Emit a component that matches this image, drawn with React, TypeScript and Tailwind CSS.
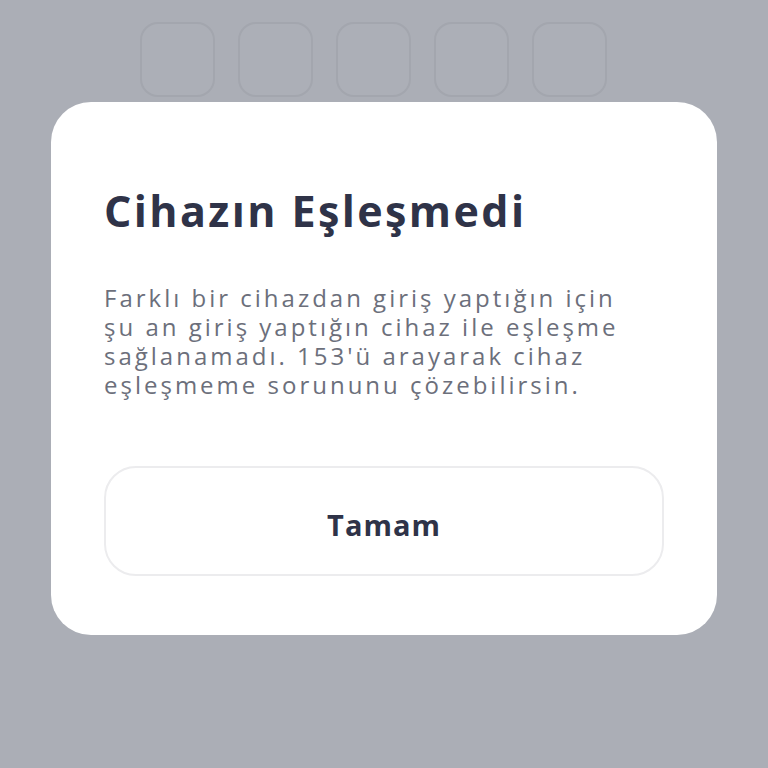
import React from "react";

export default function App() {
  const slots = [0, 1, 2, 3, 4];

  return (
    <div
      className="w-[768px] h-[768px] bg-[#abaeb6] overflow-hidden flex flex-col"
      style={{ fontFamily: "'Open Sans', 'Noto Sans', sans-serif" }}
    >
      {/* Code slots behind the modal */}
      <div className="flex justify-center gap-[23px] pt-[22px] pr-[21px]">
        {slots.map((i) => (
          <div
            key={i}
            className="w-[75px] h-[75px] rounded-[18px] border-2 border-[#a3a6ae] bg-[#acafb7]"
          />
        ))}
      </div>

      {/* Modal */}
      <div className="mx-[51px] mt-[5px] bg-white rounded-[40px] h-[533px] px-[53px] pt-[81px]">
        <h2 className="text-[43px] leading-[56px] font-bold text-[#2f3348] tracking-[2.4px] whitespace-nowrap">
          Cihazın Eşleşmedi
        </h2>
        <p className="mt-[44px] text-[24px] leading-[29px] text-[#6c6f7b] tracking-[3px] whitespace-nowrap">
          Farklı bir cihazdan giriş yaptığın için
          <br />
          şu an giriş yaptığın cihaz ile eşleşme
          <br />
          sağlanamadı. 153'ü arayarak cihaz
          <br />
          eşleşmeme sorununu çözebilirsin.
        </p>
        <button className="mt-[67px] w-full h-[110px] rounded-[32px] border-2 border-[#ececee] bg-white flex items-center justify-center pt-[8px] text-[29px] font-bold text-[#2f3348] tracking-[1px]">
          Tamam
        </button>
      </div>
    </div>
  );
}
